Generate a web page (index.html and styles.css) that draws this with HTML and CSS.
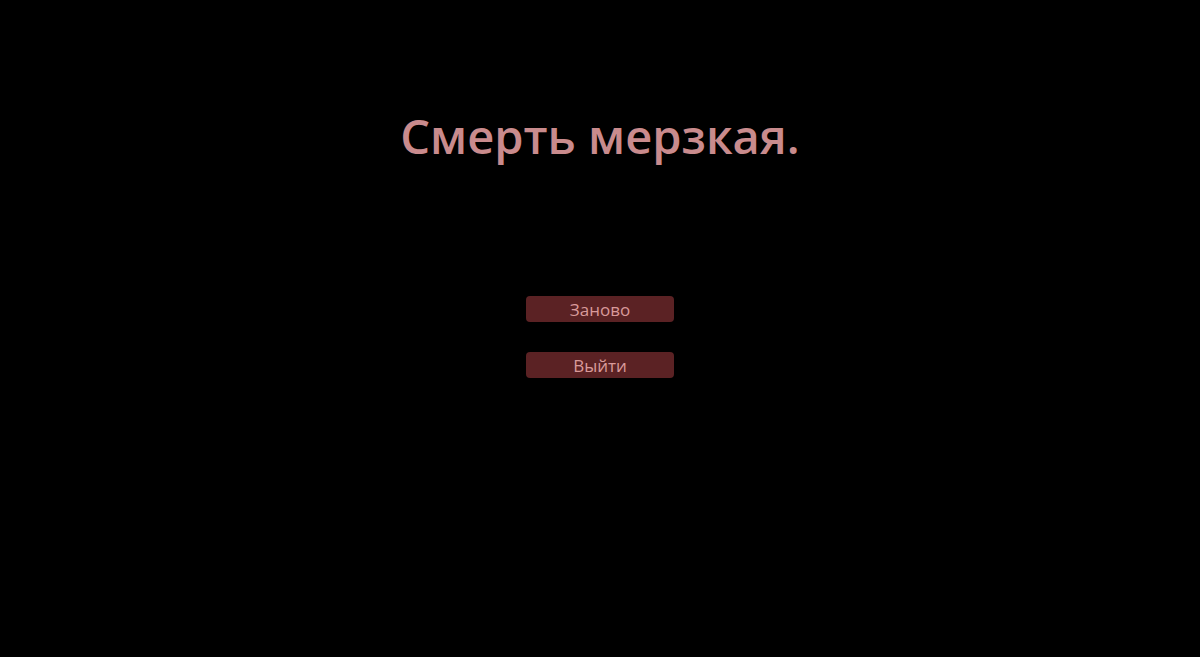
FILE: index.html
```html
<!DOCTYPE html>
<html lang="ru">
<head>
  <meta charset="UTF-8">
  <meta name="viewport" content="width=device-width, initial-scale=1.0">
  <link rel="stylesheet" href="styles.css">
  <title>Game Over</title>
</head>
<body>
  <div class="screen">
    <h1 class="title">Смерть мерзкая.</h1>

    <div class="menu">
      <button class="menu-btn">Заново</button>
      <button class="menu-btn">Выйти</button>
    </div>
  </div>
</body>
</html>
```

FILE: styles.css
```css
body {
  margin: 0;
  padding: 0;
  background-color: #000;
  font-family: "Open Sans", sans-serif;
  height: 100vh;
}

.screen {
  display: flex;
  flex-direction: column;
  align-items: center;
}

.title {
  margin: 106px 0 0;
  font-size: 47px;
  font-weight: 600;
  line-height: 60px;
  color: #c98b8d;
}

.menu {
  display: flex;
  flex-direction: column;
  gap: 30px;
  margin-top: 130px;
}

.menu-btn {
  width: 148px;
  height: 26px;
  padding: 0;
  border: none;
  border-radius: 4px;
  background-color: #5b2224;
  color: #d99a9a;
  font-family: "Open Sans", sans-serif;
  font-size: 17px;
  font-weight: 500;
  cursor: pointer;
}

.menu-btn:hover {
  background-color: #6b2a2c;
}
```
